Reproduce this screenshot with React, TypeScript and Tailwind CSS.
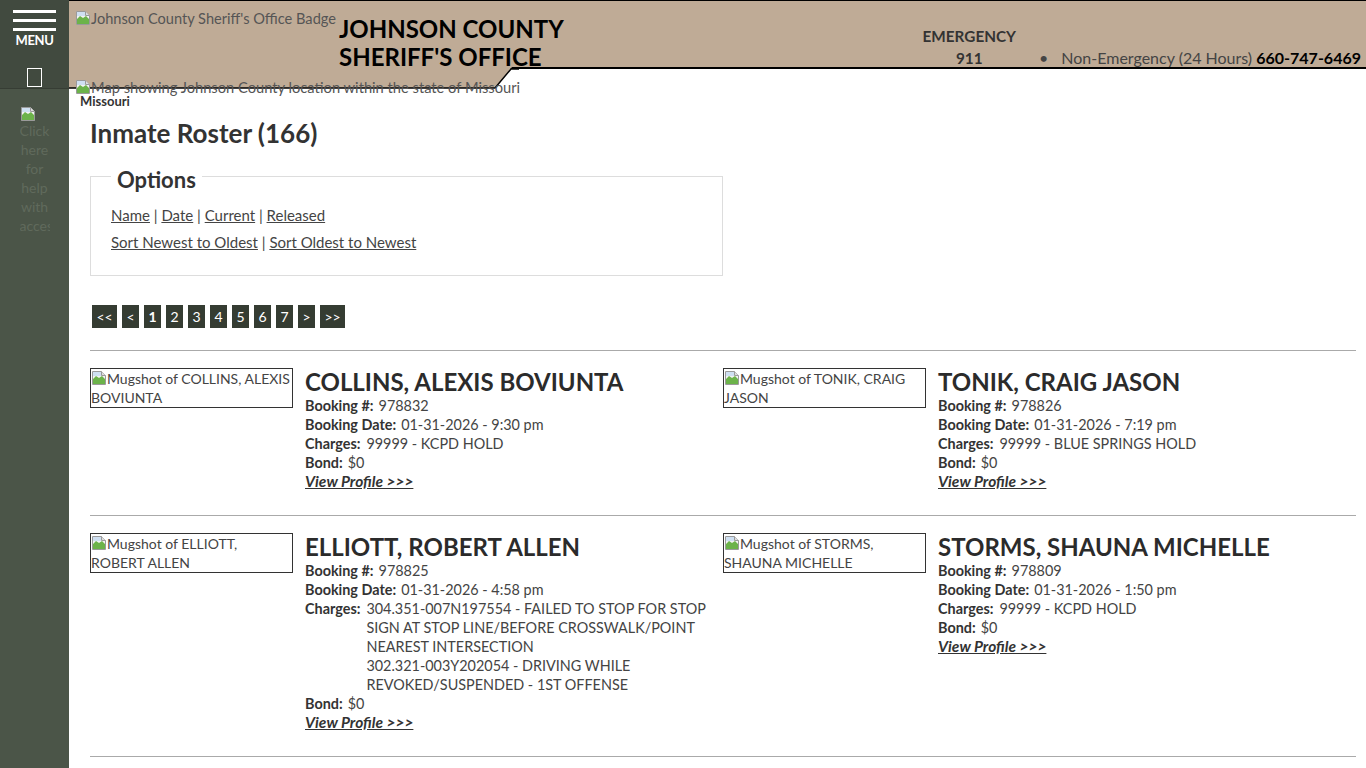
import React from "react";

const FONT = { fontFamily: "Lato, 'Open Sans', Arial, sans-serif" };

function BrokenImg() {
  return (
    <svg width="16" height="16" viewBox="0 0 16 16" className="inline-block align-[-2px]">
      <path d="M1.5 1.5h9l4 4v9h-13z" fill="#f3f3f3" stroke="#9a9a9a" />
      <path d="M2 9l3-3 3 2 3-2 3 3v5H2z" fill="#6cb34a" />
      <path d="M2 2h8v4H2z" fill="#cfe0f2" />
      <path d="M10.5 1.5v4h4" fill="#ddd" stroke="#9a9a9a" />
    </svg>
  );
}

type Inmate = {
  name: string;
  booking: string;
  date: string;
  charges: string[];
  bond: string;
};

const rows: Inmate[][] = [
  [
    { name: "COLLINS, ALEXIS BOVIUNTA", booking: "978832", date: "01-31-2026 - 9:30 pm", charges: ["99999 - KCPD HOLD"], bond: "$0" },
    { name: "TONIK, CRAIG JASON", booking: "978826", date: "01-31-2026 - 7:19 pm", charges: ["99999 - BLUE SPRINGS HOLD"], bond: "$0" },
  ],
  [
    {
      name: "ELLIOTT, ROBERT ALLEN",
      booking: "978825",
      date: "01-31-2026 - 4:58 pm",
      charges: [
        "304.351-007N197554 - FAILED TO STOP FOR STOP SIGN AT STOP LINE/BEFORE CROSSWALK/POINT NEAREST INTERSECTION",
        "302.321-003Y202054 - DRIVING WHILE REVOKED/SUSPENDED - 1ST OFFENSE",
      ],
      bond: "$0",
    },
    { name: "STORMS, SHAUNA MICHELLE", booking: "978809", date: "01-31-2026 - 1:50 pm", charges: ["99999 - KCPD HOLD"], bond: "$0" },
  ],
];

function Card({ p }: { p: Inmate }) {
  return (
    <div className="flex items-start">
      <div className="w-[203px] h-[40px] shrink-0 border border-[#333] overflow-hidden text-[14px] leading-[19px] text-[#444]">
        <BrokenImg />
        Mugshot of {p.name}
      </div>
      <div className="ml-3 text-[14.4px] leading-[19px] text-[#444]">
        <div className="text-[24px] leading-[28px] font-bold text-[#2b2b2b]">{p.name}</div>
        <div>
          <b className="text-[#333] mr-[5px]">Booking #:</b>
          {p.booking}
        </div>
        <div>
          <b className="text-[#333] mr-[5px]">Booking Date:</b>
          {p.date}
        </div>
        <div className="flex">
          <b className="text-[#333] mr-[6px] shrink-0">Charges:</b>
          <div className="max-w-[345px]">
            {p.charges.map((c) => (
              <div key={c}>{c}</div>
            ))}
          </div>
        </div>
        <div>
          <b className="text-[#333] mr-[5px]">Bond:</b>
          {p.bond}
        </div>
        <a className="text-[15.5px] font-bold italic underline text-[#333]">View Profile &gt;&gt;&gt;</a>
      </div>
    </div>
  );
}

export default function App() {
  const pages = ["<<", "<", "1", "2", "3", "4", "5", "6", "7", ">", ">>"];
  return (
    <div className="flex min-h-[768px] bg-white text-[#333]" style={FONT}>
      <aside className="w-[69px] shrink-0 bg-[#4b5548]">
        <div className="h-[89px] bg-[#414a3f] border-b border-[#363d34] flex flex-col items-center pt-[10px]">
          <div className="w-[43px] h-[3px] bg-white" />
          <div className="w-[43px] h-[3px] bg-white mt-[6px]" />
          <div className="w-[43px] h-[3px] bg-white mt-[6px]" />
          <div className="text-white font-bold text-[13px] leading-[16px] mt-[1px] tracking-tight">MENU</div>
          <div className="w-[15px] h-[19px] border-[1.5px] border-white mt-[20px] -ml-[1px]" />
        </div>
        <div className="mx-auto mt-[16px] w-[30px] h-[128px] overflow-hidden text-center text-[14px] leading-[19px] text-[#606a5c]">
          <div className="text-left h-[16px]">
            <BrokenImg />
          </div>
          Click here for help with accessibility
        </div>
      </aside>

      <main className="flex-1 min-w-0 relative">
        <header className="relative h-[69px] bg-[#bfab96] border-t border-black border-b-2 flex items-start">
          <div className="pl-[6px] pt-[9px] w-[270px] text-[14.6px] leading-[18px] text-[#555] whitespace-nowrap">
            <BrokenImg />
            Johnson County Sheriff's Office Badge
          </div>
          <h1 className="pt-[14px] text-[24px] leading-[28px] font-bold text-black">
            JOHNSON COUNTY
            <br />
            SHERIFF'S OFFICE
          </h1>
          <div className="ml-auto flex items-end pt-[24px] text-[16px] leading-[22px]">
            <div className="text-center font-bold text-[15.3px] text-[#333]">
              <div>EMERGENCY</div>
              <div>911</div>
            </div>
            <div className="ml-[23px] text-[#444]">•</div>
            <div className="ml-[13px] pr-[5px] text-[#444]">
              Non-Emergency (24 Hours) <b className="text-black">660-747-6469</b>
            </div>
          </div>
        </header>
        <svg className="absolute left-0 top-[67px]" width="450" height="23" viewBox="0 0 450 23">
          <path d="M0 0H443L426 21H0Z" fill="#bfab96" />
          <path d="M0 21H426L442 2H450" fill="none" stroke="#000" strokeWidth="1.5" />
        </svg>

        <div className="relative pl-[6px] pt-[10px] text-[14.7px] leading-[17px] text-[#555] whitespace-nowrap">
          <BrokenImg />
          Map showing Johnson County location within the state of Missouri
        </div>
        <div className="pl-[11px] -mt-[2px] text-[13px] leading-[14px] font-bold text-[#333]">Missouri</div>

        <div className="px-[21px] pr-[10px]">
          <h2 className="mt-[9px] text-[26px] leading-[32px] font-bold text-[#333]">Inmate Roster (166)</h2>

          <fieldset className="mt-[11px] w-[633px] h-[116px] border border-[#ddd] px-[20px]">
            <legend className="px-[6px] pt-[8px] text-[22px] leading-[24px] font-bold text-[#333]">Options</legend>
            <div className="mt-[10px] text-[15px] leading-[27px] text-[#444]">
              <div>
                <a className="underline">Name</a> | <a className="underline">Date</a> |{" "}
                <a className="underline">Current</a> | <a className="underline">Released</a>
              </div>
              <div>
                <a className="underline">Sort Newest to Oldest</a> | <a className="underline">Sort Oldest to Newest</a>
              </div>
            </div>
          </fieldset>

          <div className="mt-[29px] ml-[2px] flex gap-[5px]">
            {pages.map((p) => (
              <span
                key={p}
                className={
                  "h-[23px] bg-[#353c32] text-white text-[14px] leading-[23px] text-center " +
                  (p.length === 2 ? "w-[25px]" : "w-[17px]") +
                  (p === "1" ? " font-bold" : "")
                }
              >
                {p}
              </span>
            ))}
          </div>

          <hr className="mt-[22px] border-t border-[#aaa]" />
          {rows.map((r, i) => (
            <div key={i}>
              <div className="grid grid-cols-2 pt-[17px] pb-[24px]">
                {r.map((p) => (
                  <Card key={p.name} p={p} />
                ))}
              </div>
              <hr className="border-t border-[#aaa]" />
            </div>
          ))}
        </div>
      </main>
    </div>
  );
}
